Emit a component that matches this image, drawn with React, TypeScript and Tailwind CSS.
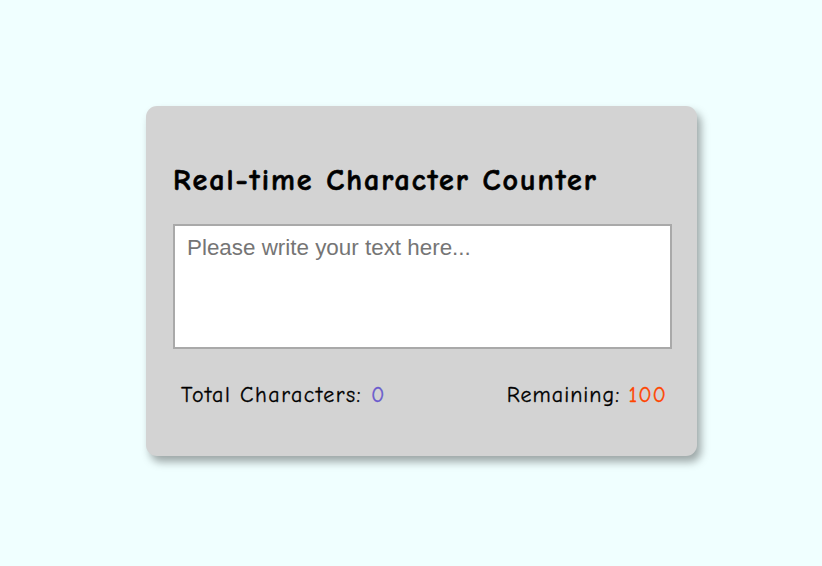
import { useState } from 'react';

const LIMIT = 100;

export default function App() {
  const [text, setText] = useState('');
  const remaining = LIMIT - text.length;

  return (
    <div className="flex min-h-[566px] items-center justify-center bg-[#f0ffff] pb-[4px] pl-[21px] font-['Comic_Sans_MS','Comic_Neue',cursive]">
      <div className="w-[551px] rounded-[11px] bg-[#d3d3d3] pb-[46px] pl-[27px] pr-[25px] pt-[57px] shadow-[4px_6px_9px_rgba(0,0,0,0.35)]">
        <h2 className="mb-[25px] text-[30px] font-bold leading-[36px] tracking-[2px] text-black [-webkit-text-stroke:0.6px_black]">
          Real-time Character Counter
        </h2>
        <textarea
          value={text}
          maxLength={LIMIT}
          onChange={(e) => setText(e.target.value)}
          placeholder="Please write your text here..."
          className="block h-[125px] w-full resize-none border-2 border-[#a9a9a9] bg-white px-[12px] py-[8px] font-['Liberation_Sans',Arial,sans-serif] text-[22.4px] leading-[27px] outline-none placeholder:text-[#757575]"
        />
        <div className="mt-[31px] flex justify-between pl-[8px] pr-[5px] text-[22px] leading-[30px] tracking-[1.5px] text-black [-webkit-text-stroke:0.3px_black]">
          <p>
            Total Characters: <span className="text-[#6a5acd] [-webkit-text-stroke:0.3px_#6a5acd]">{text.length}</span>
          </p>
          <p className="tracking-[1px]">
            Remaining: <span className="text-[#ff4500] [-webkit-text-stroke:0.3px_#ff4500]">{remaining}</span>
          </p>
        </div>
      </div>
    </div>
  );
}
